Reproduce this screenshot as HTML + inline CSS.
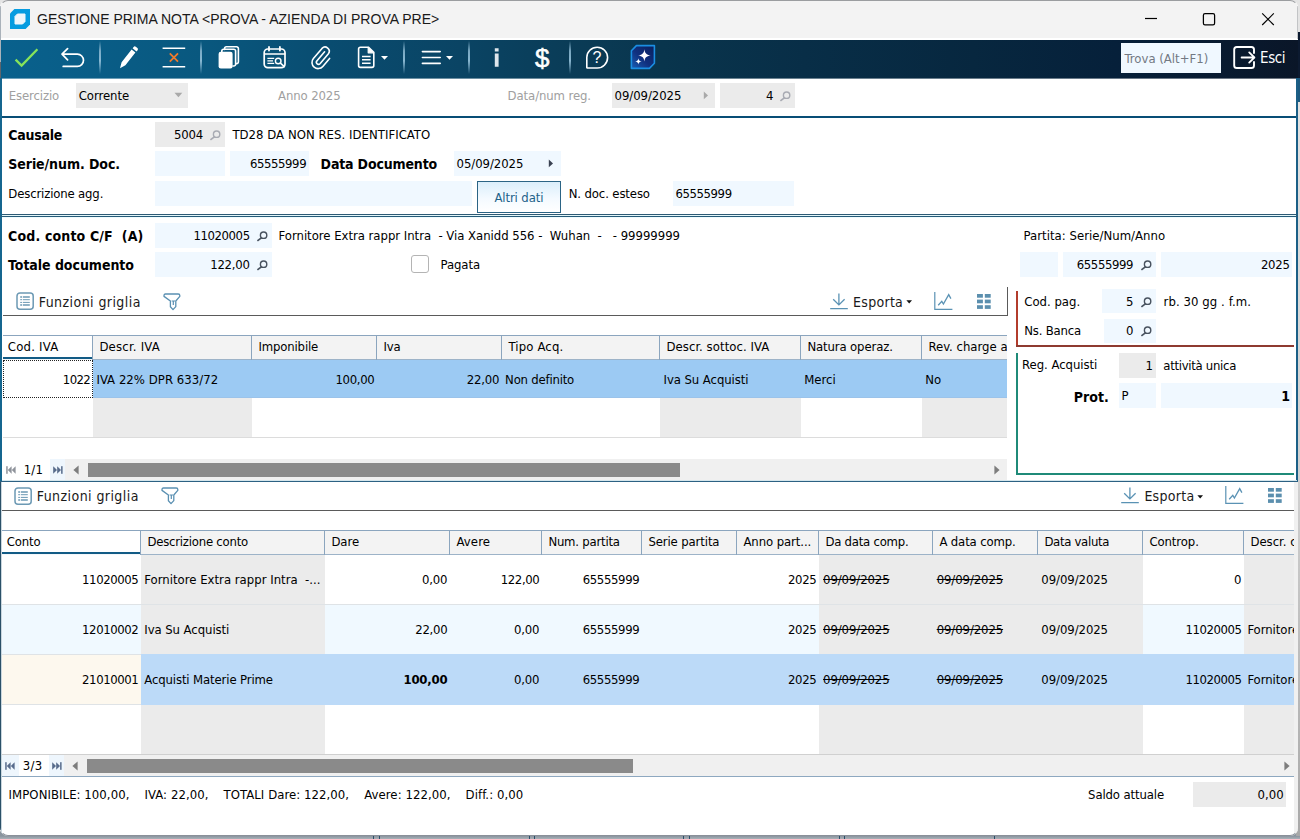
<!DOCTYPE html>
<html lang="it">
<head>
<meta charset="utf-8">
<title>GESTIONE PRIMA NOTA</title>
<style>
*{box-sizing:border-box;margin:0;padding:0}
html,body{width:1300px;height:839px;overflow:hidden}
body{background:#a9abae;font-family:"DejaVu Sans Condensed","Liberation Sans",sans-serif;font-size:13px;color:#000;position:relative}
#bgtop{position:absolute;left:0;top:0;width:1300px;height:32px;background:#e4e4e4}
#bgbot{position:absolute;left:0;top:832px;width:1300px;height:7px;background:linear-gradient(180deg,#8a949e 0,#8a949e 4px,#a9b1b8 7px)}
#bgbot i{position:absolute;top:4px;width:1px;height:3px;background:#2c4e6a}
#bgright{position:absolute;left:1296px;top:32px;width:4px;height:804px;background:linear-gradient(180deg,#0c1a30 0,#0c1a30 46px,#1d5a80 46px,#1d5a80 70px,#e2e2e2 70px,#d0d0d0 450px,#b4b4b4 700px,#a8a8a8 804px)}
#win{position:absolute;left:0;top:0;width:1298px;height:836px;background:#fff;border-radius:8px;overflow:hidden}
#frame{position:absolute;left:0;top:0;width:1298px;height:836px;border-radius:8px;border:1px solid #9b9da0;border-left-color:transparent;border-right-color:transparent;border-bottom-color:#8a9099;z-index:50;pointer-events:none}
.abs,#win div,#win span,#win svg{position:absolute}
#title{left:0;top:0;width:1298px;height:38px;background:#f3f3f3}
#title .txt{left:37px;top:10.4px;font-family:"Liberation Sans",sans-serif;font-size:15.5px;line-height:18px;white-space:pre;transform:scaleX(.905);transform-origin:0 0;color:#1a1a1a}
#tb{left:0;top:40px;width:1298px;height:39px;background:linear-gradient(90deg,#09618d 0%,#095d87 7%,#09587f 15.4%,#094c70 25.4%,#0a4464 35.4%,#0a3a54 46%,#09354d 51%,#082e47 62%,#07273f 75%,#06203a 86%,#0a1628 100%)}
.sep{top:1px;width:2px;height:33px;background:linear-gradient(180deg,rgba(120,170,200,0) 0%,rgba(140,185,210,.85) 30%,rgba(150,195,220,.9) 60%,rgba(120,170,200,0) 100%)}
.lbl{white-space:pre;line-height:18px}
.g{color:#a0a0a0}
.b{font-weight:bold;font-size:14px}
.fld{background:#f0f8ff;height:24px}
.fg{background:#ebebeb;height:24px}
.r{text-align:right}
.n{letter-spacing:-.35px}
.st{text-decoration:line-through}
.b2{font-weight:bold}
</style>
</head>
<body>
<div id="bgtop"></div>
<div id="bgbot"><i style="left:373px"></i><i style="left:379px"></i><i style="left:529px"></i><i style="left:534px"></i><i style="left:683px"></i><i style="left:689px"></i><i style="left:839px"></i><i style="left:844px"></i><i style="left:994px"></i></div>
<div id="bgright"></div>
<div id="win">
 <div id="title">
  <svg style="left:10px;top:9px" width="20" height="20" viewBox="0 0 20 20"><path d="M4.4 0H20V15.6L15.6 20H0V4.4Z" fill="#069ce0"/><path d="M7.4 5H15V12.6L12.6 15H5V7.4Z" fill="#eef6fb" stroke="#eef6fb" stroke-width="1" stroke-linejoin="round"/></svg>
  <span class="txt">GESTIONE PRIMA NOTA &lt;PROVA - AZIENDA DI PROVA PRE&gt;</span>
  <svg style="left:1144px;top:12px" width="14" height="14" viewBox="0 0 14 14"><path d="M1 6.5H13" stroke="#000" stroke-width="1.2"/></svg>
  <svg style="left:1201px;top:11px" width="16" height="16" viewBox="0 0 16 16"><rect x="2.4" y="2.6" width="11.2" height="11.2" rx="1.6" fill="none" stroke="#000" stroke-width="1.25"/></svg>
  <svg style="left:1260px;top:11px" width="15" height="15" viewBox="0 0 15 15"><path d="M2.2 2.4L13.8 14M13.8 2.4L2.2 14" stroke="#000" stroke-width="1.15"/></svg>
 </div>
 <div id="tb">
  <svg style="left:0;top:0" width="1298" height="38" viewBox="0 40 1298 38" fill="none" stroke="#fff" stroke-width="1.8" stroke-linecap="round" stroke-linejoin="round">
   <!-- check -->
   <path d="M15.6 59.6L21.6 65.6L37.4 49.2" stroke="#86e35a" stroke-width="2.3" stroke-linecap="butt" stroke-linejoin="miter"/>
   <!-- undo -->
   <path d="M67.6 48.6L62 54.2L67.6 59.8M62.4 54.2H77.4A6.1 6.1 0 0 1 77.4 66.4H63.2" stroke-width="1.7"/>
   <!-- pencil -->
   <path d="M120 68.2L121.6 62.2L131.6 49.4L135.4 52.4L125.4 65.2Z M132.6 48.2L133.6 47A1.6 1.6 0 0 1 135.8 46.8L137.4 48A1.6 1.6 0 0 1 137.6 50.2L136.5 51.4Z" fill="#fff" stroke="none"/>
   <!-- delete row -->
   <path d="M162.6 48.2H185.2M162.6 66.8H185.2" stroke-width="1.6" stroke-linecap="butt"/>
   <path d="M169.8 53.4L178 61.6M178 53.4L169.8 61.6" stroke="#f07a2c" stroke-width="1.8" stroke-linecap="butt"/>
   <!-- copy -->
   <path d="M224.6 49.4V48.6A1.8 1.8 0 0 1 226.4 46.8H236.6A1.8 1.8 0 0 1 238.4 48.6V61.8A1.8 1.8 0 0 1 236.6 63.6H235.8" stroke-width="1.6"/>
   <path d="M221.8 51.8V51A1.8 1.8 0 0 1 223.6 49.2H233.8A1.8 1.8 0 0 1 235.6 51V64.2A1.8 1.8 0 0 1 233.8 66H233" stroke-width="1.6"/>
   <rect x="218.6" y="51.8" width="14" height="16.6" rx="2.2" fill="#fff" stroke="none"/>
   <!-- calendar -->
   <rect x="264.2" y="49" width="20.8" height="18.6" rx="3.6" stroke-width="1.7"/>
   <path d="M264.6 54H284.8" stroke-width="1.5"/>
   <path d="M269 46.9V50.6M279.9 46.9V50.6" stroke-width="1.8"/>
   <path d="M267.4 58.3H274.2M267.4 60.8H273M267.4 63.3H274.2" stroke-width="1.3" stroke-linecap="butt"/>
   <circle cx="278.2" cy="61" r="2.8" stroke-width="1.4"/>
   <path d="M280.4 63.2L284.4 66.6" stroke-width="1.6"/>
   <!-- paperclip -->
   <path d="M324.6 53.2L316.8 62.4A2.1 2.1 0 0 0 320 65.1L328.4 55.2A4.2 4.2 0 0 0 322 49.8L313.4 59.9A6.1 6.1 0 0 0 322.8 67.8L329.6 59.8" stroke-width="1.6" transform="translate(0,-1.4)"/>
   <!-- doc -->
   <path d="M360.4 47.2H368.6L373.8 52.4V65.6A1.8 1.8 0 0 1 372 67.4H360.4A1.8 1.8 0 0 1 358.6 65.6V49A1.8 1.8 0 0 1 360.4 47.2Z" stroke-width="1.6"/>
   <path d="M368.2 47.4V52.8H373.6" fill="#fff" stroke-width="1.2"/>
   <path d="M362 56.4H370.6M362 59.8H370.6M362 63.2H370.6" stroke-width="1.5" stroke-linecap="butt"/>
   <path d="M381 56L388 56L384.5 59.8Z" fill="#fff" stroke="none"/>
   <!-- menu -->
   <path d="M422.4 51.6H440.2M422.4 57.5H440.2M422.4 63.4H440.2" stroke-width="1.6"/>
   <path d="M446 56L453 56L449.5 59.8Z" fill="#fff" stroke="none"/>
   <!-- info -->
   <path d="M494.8 48.2H498.6V51.6H494.8ZM494.8 53.4H498.6V66.8H494.8Z" fill="#dfe6ec" stroke="none"/>
   <!-- help -->
   <path d="M586.8 67.6V57.6A10.4 10.4 0 1 1 597.2 68H587.2Z" stroke-width="1.6"/>
   <!-- AI -->
   <defs><linearGradient id="aig" x1="0" y1="1" x2="1" y2="0"><stop offset="0" stop-color="#1a5fb4"/><stop offset=".45" stop-color="#10307f"/><stop offset="1" stop-color="#0a1f5c"/></linearGradient></defs><path d="M636.4 45.6H654.4V63.2L649.4 68.4H631.4V50.8Z" fill="url(#aig)" stroke="#1b8ee2" stroke-width="1.6"/>
   <path d="M644.4 49.2C645 53.4 646.2 54.6 650.6 55.4C646.2 56.2 645 57.4 644.4 61.6C643.8 57.4 642.6 56.2 638.2 55.4C642.6 54.6 643.8 53.4 644.4 49.2Z" fill="#fff" stroke="none"/>
   <path d="M638.4 58.2C638.7 60.4 639.3 61 641.6 61.4C639.3 61.8 638.7 62.4 638.4 64.6C638.1 62.4 637.5 61.8 635.2 61.4C637.5 61 638.1 60.4 638.4 58.2Z" fill="#fff" stroke="none"/>
   <!-- esci -->
   <path d="M1254 53V49.6A2.6 2.6 0 0 0 1251.4 47H1236.8A2.6 2.6 0 0 0 1234.2 49.600000000000001V65.4A2.6 2.6 0 0 0 1236.8 68H1251.4A2.6 2.6 0 0 0 1254 65.4V62" stroke-width="1.9"/>
   <path d="M1241.6 57.5H1254M1249.2 52.4L1254.4 57.5L1249.2 62.6" stroke-width="1.8"/>
  </svg>
  <div class="sep" style="left:99px"></div>
  <div class="sep" style="left:200px"></div>
  <div class="sep" style="left:403px"></div>
  <div class="sep" style="left:468px"></div>
  <div class="sep" style="left:569px"></div>
  <span style="left:535px;top:2px;font-family:'Liberation Sans',sans-serif;font-size:26px;line-height:32px;color:#fff;-webkit-text-stroke:.55px #fff;transform:scaleX(1);transform-origin:0 0">$</span>
  <span style="left:592.6px;top:8px;font-family:'Liberation Sans',sans-serif;font-size:16px;line-height:20px;color:#fff">?</span>
  <div style="left:1121px;top:3px;width:100px;height:30px;background:#f0f8ff"></div>
  <span class="lbl" style="left:1124.6px;top:9.5px;font-size:13px;color:#737983;line-height:17px">Trova (Alt+F1)</span>
  <span class="lbl" style="left:1260px;top:7.5px;font-size:15px;color:#fff;line-height:20px;letter-spacing:-.4px">Esci</span>
  <div style="left:0;top:38px;width:1298px;height:1px;background:rgba(255,255,255,.4)"></div>
 </div>

 <span class="lbl g" style="left:8.7px;top:86.5px;letter-spacing:-0.115px;">Esercizio</span>
 <div style="left:76px;top:83px;width:112px;height:25px;background:#ebebeb;"></div>
 <span class="lbl " style="left:78.7px;top:86.5px;letter-spacing:-0.054px;">Corrente</span>
 <svg style="left:174px;top:92px" width="9" height="6" viewBox="0 0 9 6"><path d="M0.5 0.8H8.3L4.4 5.2Z" fill="#a9a9a9"/></svg>
 <span class="lbl g" style="left:278.1px;top:86.5px;letter-spacing:-0.117px;">Anno 2025</span>
 <span class="lbl g" style="left:507.6px;top:86.5px;letter-spacing:-0.098px;">Data/num reg.</span>
 <div style="left:612px;top:83px;width:103px;height:25px;background:#ebebeb;"></div>
 <span class="lbl " style="left:614.6px;top:86.5px;letter-spacing:-0.071px;">09/09/2025</span>
 <svg style="left:703px;top:91px" width="6" height="9" viewBox="0 0 6 9"><path d="M0.8 0.6V8.2L5 4.4Z" fill="#a9a9a9"/></svg>
 <div style="left:720px;top:83px;width:75px;height:25px;background:#ebebeb;"></div>
 <span class="lbl " style="right:524.6px;top:86.5px;">4</span>
 <svg style="left:779px;top:89.5px" width="13" height="13" viewBox="0 0 13 13" fill="none" stroke="#a8abb3"><circle cx="7.6" cy="5.2" r="3.2" stroke-width="1.4"/><path d="M5.7 7.6L1.4 10.9" stroke-width="1.7"/></svg>
 <div style="left:0px;top:116px;width:1298px;height:2px;background:#084e76;"></div>
 <div style="left:0px;top:6px;width:1px;height:56px;background:#aab2ba;"></div>
 <div style="left:1297px;top:6px;width:1px;height:33px;background:#c2c4c6;"></div>
 <div style="left:1297px;top:482px;width:1px;height:348px;background:#c9cbcd;"></div>
 <div style="left:0px;top:62px;width:1px;height:16px;background:#5e646c;"></div>
 <div style="left:0px;top:78px;width:2px;height:404px;background:#15668f;"></div>
 <div style="left:0px;top:482px;width:1px;height:348px;background:#2b5068;"></div>
 <div style="left:1px;top:482px;width:1px;height:354px;background:#c9d6de;"></div>
 <div style="left:1296px;top:78px;width:2px;height:404px;background:#1b5f86;"></div>
 <span class="lbl b" style="left:8.3px;top:126px;letter-spacing:-0.252px;">Causale</span>
 <div style="left:155px;top:122px;width:70px;height:25px;background:#ebebeb;"></div>
 <span class="lbl " style="right:1095.1px;top:125.5px;letter-spacing:-0.216px;">5004</span>
 <svg style="left:209px;top:128.5px" width="13" height="13" viewBox="0 0 13 13" fill="none" stroke="#a8abb3"><circle cx="7.6" cy="5.2" r="3.2" stroke-width="1.4"/><path d="M5.7 7.6L1.4 10.9" stroke-width="1.7"/></svg>
 <span class="lbl " style="left:232.4px;top:125.5px;letter-spacing:0.035px;">TD28 DA NON RES. IDENTIFICATO</span>
 <span class="lbl b" style="left:8.3px;top:155px;letter-spacing:-0.079px;">Serie/num. Doc.</span>
 <div style="left:155px;top:151px;width:70px;height:25px;background:#f0f8ff;"></div>
 <div style="left:230px;top:151px;width:79px;height:25px;background:#f0f8ff;"></div>
 <span class="lbl " style="right:991.8px;top:154.5px;letter-spacing:-0.402px;">65555999</span>
 <span class="lbl b" style="left:320.6px;top:155px;letter-spacing:-0.167px;">Data Documento</span>
 <div style="left:454px;top:151px;width:107px;height:25px;background:#f0f8ff;"></div>
 <span class="lbl " style="left:456.6px;top:154.5px;letter-spacing:-0.071px;">05/09/2025</span>
 <svg style="left:548px;top:159px" width="6" height="9" viewBox="0 0 6 9"><path d="M0.8 0.6V8.2L5 4.4Z" fill="#3a4252"/></svg>
 <span class="lbl " style="left:8.3px;top:184.5px;letter-spacing:-0.156px;">Descrizione agg.</span>
 <div style="left:155px;top:181px;width:317px;height:25px;background:#f0f8ff;"></div>
 <div style="left:477px;top:181px;width:84px;height:32px;border:1px solid #2b6485;background:linear-gradient(#dbeefb,#f4faff 55%,#ffffff)"></div>
 <span class="lbl " style="left:494.4px;top:188.5px;letter-spacing:-0.113px;color:#1d628a">Altri dati</span>
 <span class="lbl " style="left:568.7px;top:184.5px;letter-spacing:-0.124px;">N. doc. esteso</span>
 <div style="left:673px;top:181px;width:121px;height:25px;background:#f0f8ff;"></div>
 <span class="lbl " style="left:675.4px;top:184.5px;letter-spacing:-0.402px;">65555999</span>
 <div style="left:2px;top:214px;width:1295px;height:1px;background:#2e5a74;"></div>
 <div style="left:2px;top:215px;width:1294px;height:1px;background:#e3f7fa;"></div>
 <div style="left:0px;top:216px;width:1298px;height:1px;background:#265a78;"></div>
 <div style="left:2px;top:217px;width:1294px;height:1px;background:#eefbfd;"></div>
 <span class="lbl b" style="left:8.1px;top:227px;letter-spacing:0.142px;">Cod. conto C/F  (A)</span>
 <div style="left:155px;top:223px;width:117px;height:25px;background:#f0f8ff;"></div>
 <span class="lbl " style="right:1048.3px;top:226.5px;letter-spacing:-0.402px;">11020005</span>
 <svg style="left:256px;top:229.5px" width="13" height="13" viewBox="0 0 13 13" fill="none" stroke="#48525f"><circle cx="7.6" cy="5.2" r="3.2" stroke-width="1.4"/><path d="M5.7 7.6L1.4 10.9" stroke-width="1.7"/></svg>
 <span class="lbl " style="left:278.6px;top:226.5px;letter-spacing:-0.026px;">Fornitore Extra rappr Intra  - Via Xanidd 556 -  Wuhan  -   - 99999999</span>
 <span class="lbl b" style="left:8.1px;top:256px;letter-spacing:-0.049px;">Totale documento</span>
 <div style="left:155px;top:252px;width:117px;height:25px;background:#f0f8ff;"></div>
 <span class="lbl " style="right:1048.3px;top:255.5px;letter-spacing:-0.237px;">122,00</span>
 <svg style="left:256px;top:258.5px" width="13" height="13" viewBox="0 0 13 13" fill="none" stroke="#48525f"><circle cx="7.6" cy="5.2" r="3.2" stroke-width="1.4"/><path d="M5.7 7.6L1.4 10.9" stroke-width="1.7"/></svg>
 <div style="left:411px;top:255px;width:18px;height:18px;border:1px solid #b4b4b4;border-radius:3px;background:#fff"></div>
 <span class="lbl " style="left:440.5px;top:255.5px;letter-spacing:-0.081px;">Pagata</span>
 <span class="lbl " style="left:1023.6px;top:226.5px;letter-spacing:0.022px;">Partita: Serie/Num/Anno</span>
 <div style="left:1020px;top:252px;width:38px;height:25px;background:#f0f8ff;"></div>
 <div style="left:1063px;top:252px;width:93px;height:25px;background:#f0f8ff;"></div>
 <span class="lbl " style="right:164.9px;top:255.5px;letter-spacing:-0.402px;">65555999</span>
 <svg style="left:1140px;top:258.5px" width="13" height="13" viewBox="0 0 13 13" fill="none" stroke="#48525f"><circle cx="7.6" cy="5.2" r="3.2" stroke-width="1.4"/><path d="M5.7 7.6L1.4 10.9" stroke-width="1.7"/></svg>
 <div style="left:1161px;top:252px;width:131px;height:25px;background:#f0f8ff;"></div>
 <span class="lbl " style="right:8.3px;top:255.5px;letter-spacing:-0.241px;">2025</span>
 <div style="left:1016px;top:291px;width:2px;height:54px;background:#b23c2c;"></div>
 <div style="left:1016px;top:345px;width:278px;height:2px;background:#8e3a30;"></div>
 <span class="lbl " style="left:1024.3px;top:293px;letter-spacing:-0.014px;">Cod. pag.</span>
 <div style="left:1102px;top:289px;width:54px;height:24px;background:#f0f8ff;"></div>
 <span class="lbl " style="right:164.6px;top:292.5px;">5</span>
 <svg style="left:1140px;top:295.5px" width="13" height="13" viewBox="0 0 13 13" fill="none" stroke="#48525f"><circle cx="7.6" cy="5.2" r="3.2" stroke-width="1.4"/><path d="M5.7 7.6L1.4 10.9" stroke-width="1.7"/></svg>
 <span class="lbl " style="left:1163.5px;top:293px;letter-spacing:0.079px;">rb. 30 gg . f.m.</span>
 <span class="lbl " style="left:1024.3px;top:321.5px;letter-spacing:-0.197px;">Ns. Banca</span>
 <div style="left:1104px;top:319px;width:52px;height:24px;background:#f0f8ff;"></div>
 <span class="lbl " style="right:164.6px;top:321.5px;">0</span>
 <svg style="left:1140px;top:324.5px" width="13" height="13" viewBox="0 0 13 13" fill="none" stroke="#48525f"><circle cx="7.6" cy="5.2" r="3.2" stroke-width="1.4"/><path d="M5.7 7.6L1.4 10.9" stroke-width="1.7"/></svg>
 <div style="left:1016px;top:353px;width:2px;height:122px;background:#1f8a78;"></div>
 <div style="left:1016px;top:473px;width:278px;height:2px;background:#1f8a78;"></div>
 <span class="lbl " style="left:1022.1px;top:356px;letter-spacing:-0.047px;">Reg. Acquisti</span>
 <div style="left:1119px;top:353px;width:37px;height:25px;background:#ebebeb;"></div>
 <span class="lbl " style="right:145.1px;top:356.5px;">1</span>
 <span class="lbl " style="left:1163.3px;top:356.5px;letter-spacing:-0.299px;">attività unica</span>
 <span class="lbl b" style="right:189.1px;top:387.5px;letter-spacing:0.059px;">Prot.</span>
 <div style="left:1119px;top:383px;width:37px;height:25px;background:#f0f8ff;"></div>
 <span class="lbl " style="left:1121.6px;top:386.5px;">P</span>
 <div style="left:1161px;top:383px;width:131px;height:25px;background:#f0f8ff;"></div>
 <span class="lbl b" style="right:8.1px;top:386.5px;">1</span>
 <svg style="left:16px;top:292px" width="19" height="19" viewBox="0 0 19 19" fill="none" stroke="#6c99b4" stroke-width="1.5"><rect x="1" y="0.9" width="16.2" height="16.4" rx="3"/><path d="M4.2 5H6M6.8 5H13.8M4.2 12.9H6M6.8 12.9H13.8" stroke-width="1.5"/><path d="M4.2 7.7H6M6.8 7.7H13.8M4.2 10.4H6M6.8 10.4H13.8" stroke-width="1"/></svg>
 <span class="lbl " style="left:38.8px;top:292.5px;letter-spacing:0.429px;font-size:14px;color:#1a1a1a">Funzioni griglia</span>
 <svg style="left:163px;top:291.5px" width="19" height="20" viewBox="0 0 19 20" fill="none" stroke="#5a90b2" stroke-width="1.3" stroke-linejoin="round" stroke-linecap="round"><path d="M2.4 2H15.2Q16.8 2 16.8 3.4V4.4L12.8 9V14.6L10 17.6L7.4 14.8V9L1 4.4V3.4Q1 2 2.4 2Z"/><path d="M8.6 9H12M10.3 9V13" stroke-width="1.2" stroke-linecap="butt"/></svg>
 <svg style="left:830px;top:292.5px" width="19" height="17" viewBox="0 0 19 17" fill="none" stroke="#5a92b4" stroke-width="1.3"><path d="M8.9 0.6V11.6M3.2 6.2L8.9 11.9L14.6 6.2M0.2 15.6H17.8"/></svg>
 <span class="lbl " style="left:853.1px;top:292.5px;letter-spacing:0.277px;font-size:14px;color:#1a1a1a">Esporta</span>
 <svg style="left:905.6px;top:300.3px" width="7" height="5" viewBox="0 0 7 5"><path d="M0.4 0.3H6L3.2 3.6Z" fill="#111"/></svg>
 <svg style="left:933.5px;top:291.9px" width="20" height="19" viewBox="0 0 20 19" fill="none" stroke="#5a92b4" stroke-width="1.2"><path d="M0.8 0V17.3H18.4"/><path d="M4.2 13.2L7.8 9.4L9.4 12L14.7 2.6L16.9 6.6" stroke-width="1.3"/></svg>
 <svg style="left:976.5px;top:293.5px" width="15" height="16" viewBox="0 0 15 16" fill="#5b8fae"><rect x="0" y="0" width="5.9" height="3.7"/><rect x="7.8" y="0" width="5.9" height="3.7"/><rect x="0" y="5.6" width="5.9" height="3.7"/><rect x="7.8" y="5.6" width="5.9" height="3.7"/><rect x="0" y="11.2" width="5.9" height="3.7"/><rect x="7.8" y="11.2" width="5.9" height="3.7"/></svg>
 <div style="left:3px;top:315px;width:1005px;height:1px;background:#5a5a5a;"></div>
 <div style="left:1007px;top:287px;width:1px;height:29px;background:#5a5a5a;"></div>
 <div style="left:3px;top:335px;width:1004px;height:1px;background:#8ba5be;"></div>
 <div style="left:3px;top:336px;width:1004px;height:23px;background:#f3f3f3;"></div>
 <div style="left:3px;top:359px;width:1004px;height:1px;background:#9db3c8;"></div>
 <div style="left:3px;top:336px;width:89px;height:21px;background:#fff;"></div>
 <div style="left:3px;top:357px;width:89px;height:2px;background:#125b85;"></div>
 <div style="left:3px;top:359px;width:89px;height:1px;background:#f4f8fb;"></div>
 <span class="lbl " style="left:7.8px;top:337.7px;letter-spacing:0.225px;">Cod. IVA</span>
 <div style="left:92px;top:335px;width:1px;height:25px;background:#8ba5be;"></div>
 <span class="lbl " style="left:99.4px;top:337.7px;letter-spacing:0.221px;">Descr. IVA</span>
 <div style="left:251px;top:335px;width:1px;height:25px;background:#8ba5be;"></div>
 <span class="lbl " style="left:258.4px;top:337.7px;letter-spacing:-0.142px;">Imponibile</span>
 <div style="left:376px;top:335px;width:1px;height:25px;background:#8ba5be;"></div>
 <span class="lbl " style="left:383.4px;top:337.7px;letter-spacing:-0.182px;">Iva</span>
 <div style="left:501px;top:335px;width:1px;height:25px;background:#8ba5be;"></div>
 <span class="lbl " style="left:508.4px;top:337.7px;letter-spacing:0.153px;">Tipo Acq.</span>
 <div style="left:659px;top:335px;width:1px;height:25px;background:#8ba5be;"></div>
 <span class="lbl " style="left:666.4px;top:337.7px;letter-spacing:0.066px;">Descr. sottoc. IVA</span>
 <div style="left:800px;top:335px;width:1px;height:25px;background:#8ba5be;"></div>
 <span class="lbl " style="left:807.4px;top:337.7px;letter-spacing:-0.129px;">Natura operaz.</span>
 <div style="left:921px;top:335px;width:1px;height:25px;background:#8ba5be;"></div>
 <div style="left:922px;top:337px;width:85px;height:20px;overflow:hidden">
 <span class="lbl " style="left:6.4px;top:0.7px;">Rev. charge a</span>
 </div>
 <div style="left:3px;top:360px;width:1004px;height:38px;background:#9ccaf3;"></div>
 <div style="left:3px;top:397px;width:1004px;height:1px;background:#9bc3ea;"></div>
 <div style="left:3px;top:360px;width:90px;height:38px;background:#fff;border:1px dotted #222"></div>
 <span class="lbl " style="right:1207.8px;top:370.6px;letter-spacing:-0.591px;">1022</span>
 <span class="lbl " style="left:96.4px;top:370.6px;letter-spacing:0.040px;">IVA 22% DPR 633/72</span>
 <span class="lbl " style="right:923.5px;top:370.6px;letter-spacing:-0.320px;">100,00</span>
 <span class="lbl " style="right:798.7px;top:370.6px;letter-spacing:-0.177px;">22,00</span>
 <span class="lbl " style="left:505.1px;top:370.6px;letter-spacing:-0.203px;">Non definito</span>
 <span class="lbl " style="left:663.5px;top:370.6px;letter-spacing:-0.069px;">Iva Su Acquisti</span>
 <span class="lbl " style="left:804.3px;top:370.6px;letter-spacing:-0.020px;">Merci</span>
 <span class="lbl " style="left:925.3px;top:370.6px;letter-spacing:-0.103px;">No</span>
 <div style="left:93px;top:398px;width:159px;height:39px;background:#ebebeb;"></div>
 <div style="left:660px;top:398px;width:141px;height:39px;background:#ebebeb;"></div>
 <div style="left:922px;top:398px;width:85px;height:39px;background:#ebebeb;"></div>
 <div style="left:3px;top:437px;width:1004px;height:1px;background:#dcdcdc;"></div>
 <div style="left:3px;top:459px;width:1004px;height:21px;background:#f0f0f0;"></div>
 <div style="left:3px;top:459px;width:17px;height:21px;background:#fff;"></div>
 <svg style="left:6px;top:465.5px" width="10" height="8" viewBox="0 0 10 8" fill="#8f939b"><rect x="0.2" y="0.2" width="1.5" height="7.6"/><path d="M5.6 0.2V7.8L1.8 4Z"/><path d="M9.6 0.2V7.8L5.8 4Z"/></svg>
 <div style="left:20px;top:459px;width:30px;height:21px;background:#fff;"></div>
 <span class="lbl " style="left:23.8px;top:460.8px;letter-spacing:0.124px;">1/1</span>
 <div style="left:50px;top:459px;width:15px;height:21px;background:#eef6fd;"></div>
 <svg style="left:52.5px;top:465.5px" width="10" height="8" viewBox="0 0 10 8" fill="#586c8c"><path d="M0.2 0.2V7.8L4 4Z"/><path d="M4.2 0.2V7.8L8 4Z"/><rect x="8.1" y="0.2" width="1.5" height="7.6"/></svg>
 <svg style="left:72.6px;top:464.5px" width="6" height="10" viewBox="0 0 6 10"><path d="M5.6 0.4V9.6L0.4 5Z" fill="#7d7d7d"/></svg>
 <div style="left:88px;top:463.0px;width:592px;height:13.5px;background:#8a8a8a;"></div>
 <svg style="left:994px;top:464.5px" width="6" height="10" viewBox="0 0 6 10"><path d="M0.4 0.4V9.6L5.6 5Z" fill="#7d7d7d"/></svg>
 <div style="left:2px;top:480px;width:1295px;height:1px;background:#d5e6ec;"></div>
 <div style="left:0px;top:481px;width:1298px;height:1px;background:#2c6183;"></div>
 <div style="left:1294px;top:482px;width:4px;height:354px;background:#f0f0f0;"></div>
 <svg style="left:14px;top:486.5px" width="19" height="19" viewBox="0 0 19 19" fill="none" stroke="#6c99b4" stroke-width="1.5"><rect x="1" y="0.9" width="16.2" height="16.4" rx="3"/><path d="M4.2 5H6M6.8 5H13.8M4.2 12.9H6M6.8 12.9H13.8" stroke-width="1.5"/><path d="M4.2 7.7H6M6.8 7.7H13.8M4.2 10.4H6M6.8 10.4H13.8" stroke-width="1"/></svg>
 <span class="lbl " style="left:36.8px;top:487px;letter-spacing:0.429px;font-size:14px;color:#1a1a1a">Funzioni griglia</span>
 <svg style="left:161px;top:486px" width="19" height="20" viewBox="0 0 19 20" fill="none" stroke="#5a90b2" stroke-width="1.3" stroke-linejoin="round" stroke-linecap="round"><path d="M2.4 2H15.2Q16.8 2 16.8 3.4V4.4L12.8 9V14.6L10 17.6L7.4 14.8V9L1 4.4V3.4Q1 2 2.4 2Z"/><path d="M8.6 9H12M10.3 9V13" stroke-width="1.2" stroke-linecap="butt"/></svg>
 <svg style="left:1121.3px;top:487px" width="19" height="17" viewBox="0 0 19 17" fill="none" stroke="#5a92b4" stroke-width="1.3"><path d="M8.9 0.6V11.6M3.2 6.2L8.9 11.9L14.6 6.2M0.2 15.6H17.8"/></svg>
 <span class="lbl " style="left:1144.4px;top:487px;letter-spacing:0.277px;font-size:14px;color:#1a1a1a">Esporta</span>
 <svg style="left:1196.9px;top:494.8px" width="7" height="5" viewBox="0 0 7 5"><path d="M0.4 0.3H6L3.2 3.6Z" fill="#111"/></svg>
 <svg style="left:1224.8px;top:486.4px" width="20" height="19" viewBox="0 0 20 19" fill="none" stroke="#5a92b4" stroke-width="1.2"><path d="M0.8 0V17.3H18.4"/><path d="M4.2 13.2L7.8 9.4L9.4 12L14.7 2.6L16.9 6.6" stroke-width="1.3"/></svg>
 <svg style="left:1267.8px;top:488px" width="15" height="16" viewBox="0 0 15 16" fill="#5b8fae"><rect x="0" y="0" width="5.9" height="3.7"/><rect x="7.8" y="0" width="5.9" height="3.7"/><rect x="0" y="5.6" width="5.9" height="3.7"/><rect x="7.8" y="5.6" width="5.9" height="3.7"/><rect x="0" y="11.2" width="5.9" height="3.7"/><rect x="7.8" y="11.2" width="5.9" height="3.7"/></svg>
 <div style="left:2px;top:510px;width:1292px;height:1px;background:#5a5a5a;"></div>
 <div style="left:2px;top:530px;width:1292px;height:1px;background:#8ba5be;"></div>
 <div style="left:2px;top:531px;width:1292px;height:23px;background:#f3f3f3;"></div>
 <div style="left:2px;top:554px;width:1292px;height:1px;background:#9db3c8;"></div>
 <div style="left:2px;top:531px;width:138px;height:21px;background:#fff;"></div>
 <div style="left:2px;top:552px;width:138px;height:2px;background:#125b85;"></div>
 <div style="left:2px;top:554px;width:138px;height:1px;background:#f4f8fb;"></div>
 <span class="lbl " style="left:6.8px;top:532.7px;letter-spacing:-0.157px;">Conto</span>
 <div style="left:140px;top:530px;width:1px;height:25px;background:#8ba5be;"></div>
 <span class="lbl " style="left:147.4px;top:532.7px;letter-spacing:-0.223px;">Descrizione conto</span>
 <div style="left:324px;top:530px;width:1px;height:25px;background:#8ba5be;"></div>
 <span class="lbl " style="left:331.4px;top:532.7px;letter-spacing:-0.027px;">Dare</span>
 <div style="left:449px;top:530px;width:1px;height:25px;background:#8ba5be;"></div>
 <span class="lbl " style="left:456.4px;top:532.7px;letter-spacing:0.144px;">Avere</span>
 <div style="left:541px;top:530px;width:1px;height:25px;background:#8ba5be;"></div>
 <span class="lbl " style="left:548.4px;top:532.7px;letter-spacing:-0.214px;">Num. partita</span>
 <div style="left:641px;top:530px;width:1px;height:25px;background:#8ba5be;"></div>
 <span class="lbl " style="left:648.4px;top:532.7px;letter-spacing:-0.121px;">Serie partita</span>
 <div style="left:736px;top:530px;width:1px;height:25px;background:#8ba5be;"></div>
 <span class="lbl " style="left:743.4px;top:532.7px;letter-spacing:-0.086px;">Anno part...</span>
 <div style="left:818px;top:530px;width:1px;height:25px;background:#8ba5be;"></div>
 <span class="lbl " style="left:825.4px;top:532.7px;letter-spacing:-0.236px;">Da data comp.</span>
 <div style="left:932px;top:530px;width:1px;height:25px;background:#8ba5be;"></div>
 <span class="lbl " style="left:939.4px;top:532.7px;letter-spacing:-0.141px;">A data comp.</span>
 <div style="left:1037px;top:530px;width:1px;height:25px;background:#8ba5be;"></div>
 <span class="lbl " style="left:1044.4px;top:532.7px;letter-spacing:-0.304px;">Data valuta</span>
 <div style="left:1142px;top:530px;width:1px;height:25px;background:#8ba5be;"></div>
 <span class="lbl " style="left:1149.4px;top:532.7px;letter-spacing:-0.093px;">Controp.</span>
 <div style="left:1243px;top:530px;width:1px;height:25px;background:#8ba5be;"></div>
 <div style="left:1244px;top:532px;width:50px;height:20px;overflow:hidden">
 <span class="lbl " style="left:6.4px;top:0.7px;">Descr. c</span>
 </div>
 <div style="left:141px;top:555px;width:184px;height:49px;background:#ebebeb;"></div>
 <div style="left:819px;top:555px;width:324px;height:49px;background:#ebebeb;"></div>
 <div style="left:1244px;top:555px;width:50px;height:49px;background:#ebebeb;"></div>
 <div style="left:2px;top:604px;width:1292px;height:1px;background:#dfe3e6;"></div>
 <span class="lbl " style="right:1159.7px;top:570.7px;letter-spacing:-0.414px;">11020005</span>
 <span class="lbl " style="left:144.3px;top:570.7px;letter-spacing:0.007px;">Fornitore Extra rappr Intra  -...</span>
 <span class="lbl " style="right:850.7px;top:570.7px;letter-spacing:-0.162px;">0,00</span>
 <span class="lbl " style="right:758.7px;top:570.7px;letter-spacing:-0.387px;">122,00</span>
 <span class="lbl " style="right:658.7px;top:570.7px;letter-spacing:-0.364px;">65555999</span>
 <span class="lbl " style="right:481.5px;top:570.7px;letter-spacing:-0.291px;">2025</span>
 <span class="lbl st" style="left:823.1px;top:570.7px;letter-spacing:-0.101px;">09/09/2025</span>
 <span class="lbl st" style="left:936.7px;top:570.7px;letter-spacing:-0.101px;">09/09/2025</span>
 <span class="lbl " style="left:1041.3px;top:570.7px;letter-spacing:-0.071px;">09/09/2025</span>
 <span class="lbl " style="right:56.5px;top:570.7px;letter-spacing:0.047px;">0</span>
 <div style="left:2px;top:605px;width:1292px;height:49px;background:#f0f9ff;"></div>
 <div style="left:141px;top:605px;width:184px;height:49px;background:#ebebeb;"></div>
 <div style="left:819px;top:605px;width:324px;height:49px;background:#ebebeb;"></div>
 <div style="left:1244px;top:605px;width:50px;height:49px;background:#ebebeb;"></div>
 <div style="left:2px;top:654px;width:139px;height:1px;background:#dfe3e6;"></div>
 <span class="lbl " style="right:1159.7px;top:620.7px;letter-spacing:-0.414px;">12010002</span>
 <span class="lbl " style="left:144.3px;top:620.7px;letter-spacing:-0.069px;">Iva Su Acquisti</span>
 <span class="lbl " style="right:850.7px;top:620.7px;letter-spacing:-0.297px;">22,00</span>
 <span class="lbl " style="right:758.7px;top:620.7px;letter-spacing:-0.162px;">0,00</span>
 <span class="lbl " style="right:658.7px;top:620.7px;letter-spacing:-0.364px;">65555999</span>
 <span class="lbl " style="right:481.5px;top:620.7px;letter-spacing:-0.291px;">2025</span>
 <span class="lbl st" style="left:823.1px;top:620.7px;letter-spacing:-0.101px;">09/09/2025</span>
 <span class="lbl st" style="left:936.7px;top:620.7px;letter-spacing:-0.101px;">09/09/2025</span>
 <span class="lbl " style="left:1041.3px;top:620.7px;letter-spacing:-0.071px;">09/09/2025</span>
 <span class="lbl " style="right:56.5px;top:620.7px;letter-spacing:-0.439px;">11020005</span>
 <div style="left:1244px;top:620.7px;width:50px;height:18px;overflow:hidden">
 <span class="lbl " style="left:3.4px;top:0px;letter-spacing:-0.047px;">Fornitore Extra rappr Intra</span>
 </div>
 <div style="left:141px;top:654px;width:1153px;height:51px;background:#bcdaf8;"></div>
 <div style="left:2px;top:655px;width:139px;height:49px;background:#fdf8ee;"></div>
 <div style="left:2px;top:704px;width:139px;height:1px;background:#dfe3e6;"></div>
 <span class="lbl " style="right:1159.7px;top:670.7px;letter-spacing:-0.414px;">21010001</span>
 <span class="lbl " style="left:144.3px;top:670.7px;letter-spacing:-0.128px;">Acquisti Materie Prime</span>
 <span class="lbl b2" style="right:850.7px;top:670.7px;letter-spacing:-0.223px;">100,00</span>
 <span class="lbl " style="right:758.7px;top:670.7px;letter-spacing:-0.162px;">0,00</span>
 <span class="lbl " style="right:658.7px;top:670.7px;letter-spacing:-0.364px;">65555999</span>
 <span class="lbl " style="right:481.5px;top:670.7px;letter-spacing:-0.291px;">2025</span>
 <span class="lbl st" style="left:823.1px;top:670.7px;letter-spacing:-0.101px;">09/09/2025</span>
 <span class="lbl st" style="left:936.7px;top:670.7px;letter-spacing:-0.101px;">09/09/2025</span>
 <span class="lbl " style="left:1041.3px;top:670.7px;letter-spacing:-0.071px;">09/09/2025</span>
 <span class="lbl " style="right:56.5px;top:670.7px;letter-spacing:-0.439px;">11020005</span>
 <div style="left:1244px;top:670.7px;width:50px;height:18px;overflow:hidden">
 <span class="lbl " style="left:3.4px;top:0px;letter-spacing:-0.047px;">Fornitore Extra rappr Intra</span>
 </div>
 <div style="left:141px;top:705px;width:184px;height:49px;background:#ebebeb;"></div>
 <div style="left:819px;top:705px;width:324px;height:49px;background:#ebebeb;"></div>
 <div style="left:1244px;top:705px;width:50px;height:49px;background:#ebebeb;"></div>
 <div style="left:2px;top:754px;width:1292px;height:1px;background:#d0d0d0;"></div>
 <div style="left:2px;top:755px;width:1292px;height:21px;background:#f0f0f0;"></div>
 <div style="left:2px;top:755px;width:17px;height:21px;background:#eef6fd;"></div>
 <svg style="left:5px;top:761.5px" width="10" height="8" viewBox="0 0 10 8" fill="#586c8c"><rect x="0.2" y="0.2" width="1.5" height="7.6"/><path d="M5.6 0.2V7.8L1.8 4Z"/><path d="M9.6 0.2V7.8L5.8 4Z"/></svg>
 <div style="left:19px;top:755px;width:30px;height:21px;background:#fff;"></div>
 <span class="lbl " style="left:22.8px;top:756.8px;letter-spacing:0.257px;">3/3</span>
 <div style="left:49px;top:755px;width:15px;height:21px;background:#eef6fd;"></div>
 <svg style="left:51.5px;top:761.5px" width="10" height="8" viewBox="0 0 10 8" fill="#586c8c"><path d="M0.2 0.2V7.8L4 4Z"/><path d="M4.2 0.2V7.8L8 4Z"/><rect x="8.1" y="0.2" width="1.5" height="7.6"/></svg>
 <svg style="left:71.6px;top:760.5px" width="6" height="10" viewBox="0 0 6 10"><path d="M5.6 0.4V9.6L0.4 5Z" fill="#7d7d7d"/></svg>
 <div style="left:87px;top:759.0px;width:546px;height:13.5px;background:#8a8a8a;"></div>
 <svg style="left:1284.2px;top:760.5px" width="6" height="10" viewBox="0 0 6 10"><path d="M0.4 0.4V9.6L5.6 5Z" fill="#7d7d7d"/></svg>
 <div style="left:2px;top:776px;width:1292px;height:1px;background:#8ea8c0;"></div>
 <span class="lbl " style="left:8.6px;top:785.5px;letter-spacing:0.063px;">IMPONIBILE: 100,00,    IVA: 22,00,    TOTALI Dare: 122,00,    Avere: 122,00,    Diff.: 0,00</span>
 <span class="lbl " style="left:1088.1px;top:785.5px;letter-spacing:-0.123px;">Saldo attuale</span>
 <div style="left:1193px;top:782px;width:93px;height:25px;background:#ebebeb;"></div>
 <span class="lbl " style="right:14.1px;top:785.5px;letter-spacing:0.088px;">0,00</span>
</div>
<div id="frame"></div>
</body>
</html>
